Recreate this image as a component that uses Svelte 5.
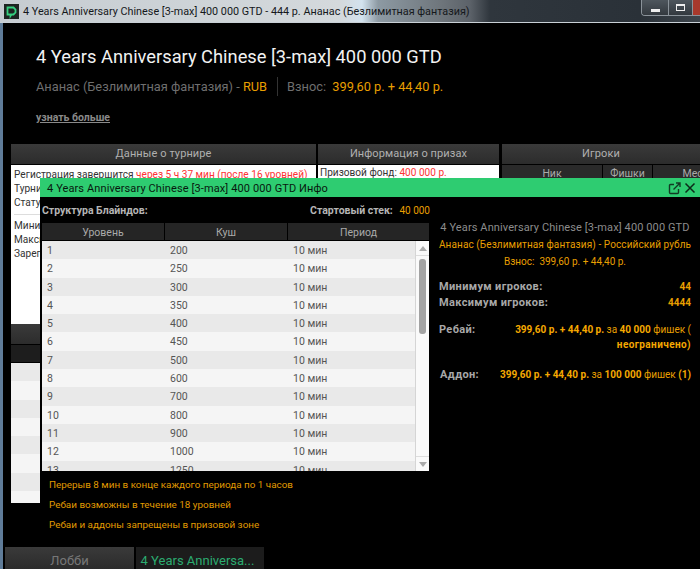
<script>
  const blinds = [200, 250, 300, 350, 400, 450, 500, 600, 700, 800, 900, 1000, 1250];
  const notes = [
    "Перерыв 8 мин в конце каждого периода по 1 часов",
    "Ребаи возможны в течение 18 уровней",
    "Ребаи и аддоны запрещены в призовой зоне",
  ];
</script>

<div class="window">
  <div class="titlebar">
    <svg class="logo" width="15" height="15" viewBox="0 0 15 15">
      <rect width="15" height="15" fill="#1d2421" />
      <path d="M3.500 3.500h6l2 2v3l-2 2H7.500l-1 1.500v-1.500h-3z" fill="none" stroke="#35d07f" stroke-width="1.800" />
    </svg>
    <span class="wintitle">4 Years Anniversary Chinese [3-max] 400 000 GTD - 444 р. Ананас (Безлимитная фантазия)</span>
    <div class="controls">
      <span class="ctl"><i class="min"></i></span>
      <span class="ctl"><i class="max"></i></span>
      <span class="ctl close"></span>
    </div>
  </div>

  <div class="content">
    <h1>4 Years Anniversary Chinese [3-max] 400 000 GTD</h1>
    <div class="sub">
      <span>Ананас (Безлимитная фантазия) - <b>RUB</b></span>
      <span class="sep"></span>
      <span>Взнос:&nbsp; <b>399,60 р. + 44,40 р.</b></span>
    </div>
    <div class="more">узнать больше</div>

    <div class="panels">
      <div class="panel info">
        <div class="phead">Данные о турнире</div>
        <div class="pbody">
          <p>Регистрация завершится <span class="red">через 5 ч 37 мин (после 16 уровней)</span></p>
          <p>Турнир</p>
          <p>Статус</p>
          <hr />
          <p>Минимум</p>
          <p>Максимум</p>
          <p>Зарег</p>
        </div>
        <div class="phead low"></div>
        <div class="phead sublow"></div>
        <div class="stripes">
          {#each Array(8) as _, i}
            <div class="stripe" class:alt={i % 2 === 1}></div>
          {/each}
        </div>
      </div>
      <div class="panel prize">
        <div class="phead">Информация о призах</div>
        <div class="pbody short"><p>Призовой фонд: <span class="red">400 000 р.</span></p></div>
      </div>
      <div class="panel players">
        <div class="phead">Игроки</div>
        <div class="cols">
          <span class="c1">Ник</span>
          <span class="c2">Фишки</span>
          <span class="c3">Место</span>
        </div>
      </div>
    </div>
  </div>

  <div class="tabs">
    <div class="tab">Лобби</div>
    <div class="tab active">4 Years Anniversa...</div>
  </div>

  <div class="dialog">
    <div class="dhead">
      <span>4 Years Anniversary Chinese [3-max] 400 000 GTD Инфо</span>
      <svg width="13" height="13" viewBox="0 0 13 13" class="popout">
        <path d="M6 2.500H2.500a1 1 0 0 0-1 1v7a1 1 0 0 0 1 1h7a1 1 0 0 0 1-1V7M5.500 7.500l6-6M8 1h4v4" fill="none" stroke="#123b24" stroke-width="1.400" />
      </svg>
      <svg width="12" height="12" viewBox="0 0 12 12" class="closex">
        <path d="M1.500 1.500l9 9M10.500 1.500l-9 9" fill="none" stroke="#0c2a18" stroke-width="1.500" />
      </svg>
    </div>
    <div class="dbody">
      <div class="left">
        <div class="structure">
          <b>Структура Блайндов:</b>
          <span class="stack"><b>Стартовый стек:</b> <em>40 000</em></span>
        </div>
        <div class="thead">
          <span>Уровень</span>
          <span>Куш</span>
          <span>Период</span>
        </div>
        <div class="tbody">
          <div class="rows">
            {#each blinds as b, i}
              <div class="row" class:alt={i % 2 === 1}>
                <span>{i + 1}</span>
                <span>{b}</span>
                <span>10 мин</span>
              </div>
            {/each}
          </div>
          <div class="scroll">
            <div class="sbtn"><i class="up"></i></div>
            <div class="track"><div class="thumb"></div></div>
            <div class="sbtn"><i class="down"></i></div>
          </div>
        </div>
        <div class="notes">
          {#each notes as n}
            <p>{n}</p>
          {/each}
        </div>
      </div>

      <div class="right">
        <div class="rtitle">4 Years Anniversary Chinese [3-max] 400 000 GTD</div>
        <div class="rgame">Ананас (Безлимитная фантазия) - Российский рубль</div>
        <div class="rfee">Взнос:&nbsp; 399,60 р. + 44,40 р.</div>
        <div class="kv first"><b>Минимум игроков:</b><em>44</em></div>
        <div class="kv"><b>Максимум игроков:</b><em>4444</em></div>
        <div class="kv rebuy">
          <b>Ребай:</b>
          <em><strong>399,60 р. + 44,40 р.</strong> за <strong>40 000</strong> фишек (<br /><strong class="wide">неограничено)</strong></em>
        </div>
        <div class="kv addon">
          <b>Аддон:</b>
          <em><strong>399,60 р. + 44,40 р.</strong> за <strong>100 000</strong> фишек <strong>(1)</strong></em>
        </div>
      </div>
    </div>
  </div>
</div>

<style>
  :global(body) {
    margin: 0;
    background: #000;
  }

  .window {
    position: relative;
    width: 700px;
    height: 569px;
    overflow: hidden;
    display: flex;
    flex-direction: column;
    background: #000;
    font-family: Roboto, "Liberation Sans", sans-serif;
  }

  .titlebar {
    flex: 0 0 23px;
    display: flex;
    align-items: center;
    padding-left: 3px;
    box-sizing: border-box;
    border-bottom: 1px solid #c9d0d6;
    background: linear-gradient(90deg, #c6ccd1 0, #d4d9dc 340px, #d3e2ee 362px, #8d9aa3 378px, #6f767c 440px, #5c6269 470px, #2f363d 490px, #2a3138 640px, #3d454c 700px);
  }

  .logo {
    margin-left: 1px;
    flex: none;
  }

  .wintitle {
    margin-left: 4px;
    font-size: 10.800px;
    white-space: nowrap;
    color: #15181b;
  }

  .controls {
    margin-left: auto;
    align-self: flex-start;
    display: flex;
    height: 15px;
    border: 1px solid #8b939a;
    border-top: 0;
    border-right: 0;
    border-radius: 0 0 0 4px;
    overflow: hidden;
  }

  .ctl {
    width: 26px;
    display: flex;
    align-items: center;
    justify-content: center;
    border-right: 1px solid #8b939a;
    background: linear-gradient(#4e565d, #33393f);
  }

  .ctl + .ctl {
    width: 23px;
  }

  .ctl.close {
    width: 7px;
    border-right: 0;
    background: #a8392c;
  }

  .min {
    width: 9px;
    height: 3px;
    margin-top: 5px;
    background: #eee;
  }

  .max {
    width: 7px;
    height: 4px;
    border: 1px solid #eee;
    border-top-width: 2px;
  }

  .content {
    flex: 1;
    min-height: 0;
    box-sizing: border-box;
    border-left: 3px solid #5f7c99;
    padding: 23px 0 0 8px;
  }

  h1 {
    margin: 0 0 0 25px;
    font-size: 18.300px;
    line-height: 22px;
    font-weight: 400;
    white-space: nowrap;
    color: #f2f2f2;
  }

  .sub {
    margin: 8px 0 0 25px;
    display: flex;
    align-items: center;
    height: 20px;
    font-size: 12.800px;
    color: #6f6f6f;
    white-space: nowrap;
  }

  .sub b {
    font-weight: 400;
    color: #e89f00;
  }

  .sep {
    width: 1px;
    height: 19px;
    margin: 0 9px 0 10px;
    background: #333;
  }

  .more {
    margin: 15px 0 0 25px;
    font-size: 10.500px;
    line-height: 13px;
    font-weight: 700;
    color: #8a8a8a;
    text-decoration: underline;
  }

  .panels {
    margin-top: 20px;
    display: flex;
    gap: 2px;
  }

  .panel {
    flex: none;
  }

  .info {
    width: 305px;
  }

  .prize {
    width: 181px;
  }

  .players {
    flex: 1;
    margin-left: 1px;
    min-width: 0;
    overflow: hidden;
  }

  .phead {
    height: 20px;
    line-height: 20px;
    text-align: center;
    font-size: 11px;
    letter-spacing: 0.1px;
    color: #b0b0b0;
    background: linear-gradient(#3a3a3a, #2c2c2c);
    border-bottom: 1px solid #000;
  }

  .pbody {
    height: 159px;
    box-sizing: border-box;
    padding: 3px 3px;
    background: #fff;
    font-size: 10.100px;
    line-height: 14px;
    color: #333;
    white-space: nowrap;
    overflow: hidden;
  }

  .pbody p {
    margin: 0;
  }

  .pbody hr {
    margin: 4px 0;
    border: 0;
    border-top: 1px solid #ddd;
  }

  .short {
    height: 13px;
    padding: 1px 2px 0;
  }

  .red {
    color: #f33;
  }

  .sublow {
    height: 17px;
    background: #1d1d1d;
  }

  .stripes {
    height: 140px;
    overflow: hidden;
  }

  .stripe {
    height: 18.300px;
    background: #e9e9e9;
  }

  .stripe.alt {
    background: #f5f5f5;
  }

  .cols {
    display: flex;
    gap: 1px;
    height: 13px;
    line-height: 18px;
    font-size: 10.500px;
    text-align: center;
    color: #aaa;
  }

  .cols span {
    background: #2a2a2a;
    flex: none;
  }

  .c1 {
    width: 100px;
  }

  .c2 {
    width: 49px;
  }

  .c3 {
    width: 90px;
  }

  .tabs {
    flex: 0 0 22px;
    display: flex;
    gap: 2px;
    border-left: 3px solid #5f7c99;
    padding-left: 2px;
  }

  .tab {
    width: 129px;
    height: 22px;
    padding-top: 3px;
    box-sizing: border-box;
    line-height: 22px;
    text-align: center;
    font-size: 13px;
    color: #777;
    background: linear-gradient(#3a3a3a, #2b2b2b);
    white-space: nowrap;
  }

  .tab.active {
    width: 128px;
    padding-right: 5px;
    color: #2bab70;
    background: #1c1c1c;
  }

  /* floats over the lobby */
  .dialog {
    position: absolute;
    left: 40px;
    top: 178px;
    right: 0;
    height: 369px;
    background: #000;
    display: flex;
    flex-direction: column;
  }

  .dhead {
    flex: 0 0 19px;
    display: flex;
    align-items: center;
    padding: 1px 4px 0 7px;
    box-sizing: border-box;
    background: #2ecc71;
    font-size: 11px;
    letter-spacing: 0.01em;
    color: #08180f;
    white-space: nowrap;
  }

  .popout {
    margin-left: auto;
  }

  .closex {
    margin-left: 3px;
  }

  .dbody {
    flex: 1;
    display: flex;
    min-height: 0;
  }

  .left {
    width: 390px;
    flex: none;
    padding-left: 2px;
    box-sizing: border-box;
    font-size: 10.500px;
  }

  .structure {
    display: flex;
    justify-content: space-between;
    align-items: center;
    height: 26px;
    color: #b5b5b5;
    white-space: nowrap;
  }

  .structure b {
    font-weight: 700;
  }

  .stack em {
    margin-left: 4px;
    font-size: 10px;
    font-style: normal;
    color: #e89f00;
  }

  .thead {
    display: flex;
    gap: 1px;
    height: 17px;
    margin-right: 1px;
    margin-bottom: 1px;
    line-height: 19px;
    font-size: 10.500px;
    color: #aaa;
    text-align: center;
  }

  .thead span {
    width: 122px;
    background: #252525;
  }

  .thead span:nth-child(3) {
    flex: 1;
  }

  .tbody {
    display: flex;
    height: 230px;
    overflow: hidden;
    margin-right: 1px;
    background: #f5f5f5;
  }

  .rows {
    flex: 1;
  }

  .row {
    display: flex;
    height: 18.300px;
    box-sizing: border-box;
    padding-top: 1px;
    line-height: 17.300px;
    font-size: 10.500px;
    color: #555;
    background: #e9e9e9;
  }

  .row.alt {
    background: #f5f5f5;
  }

  .row span {
    width: 123px;
    padding-left: 5px;
    box-sizing: border-box;
  }

  .scroll {
    flex: 0 0 13px;
    display: flex;
    flex-direction: column;
    border-left: 1px solid #d5d5d5;
    background: #fafafa;
  }

  .sbtn {
    flex: 0 0 14px;
    display: flex;
    align-items: center;
    justify-content: center;
    border-bottom: 1px solid #ddd;
  }

  .sbtn:last-child {
    border-bottom: 0;
    border-top: 1px solid #ddd;
  }

  .sbtn i {
    width: 0;
    height: 0;
    border-left: 4px solid transparent;
    border-right: 4px solid transparent;
  }

  .up {
    border-bottom: 5px solid #aaa;
  }

  .down {
    border-top: 5px solid #aaa;
  }

  .track {
    flex: 1;
    padding: 3px 3px 0;
  }

  .thumb {
    height: 75px;
    border-radius: 3px;
    background: #a3a3a3;
  }

  .notes {
    padding: 4px 0 0 7px;
    color: #e09a00;
    font-size: 9.900px;
  }

  .notes p {
    margin: 0;
    height: 20.200px;
    line-height: 20.200px;
  }

  .right {
    flex: 1;
    min-width: 0;
    padding: 22px 9px 0 9px;
    font-size: 10px;
    text-align: center;
    white-space: nowrap;
    color: #e89f00;
  }

  .rtitle {
    font-size: 11px;
    line-height: 17px;
    color: #8c8c8c;
    letter-spacing: 0.01em;
  }

  .rgame {
    line-height: 17px;
    letter-spacing: 0.01em;
  }

  .rfee {
    line-height: 17px;
  }

  .kv {
    display: flex;
    justify-content: space-between;
    align-items: flex-start;
    line-height: 15px;
    text-align: right;
  }

  .kv b {
    font-size: 11px;
    letter-spacing: 0.35px;
    color: #a8a8a8;
    font-weight: 700;
  }

  .kv em {
    font-style: normal;
    font-weight: 400;
  }

  .kv strong {
    font-weight: 700;
    color: #f5a800;
  }

  .kv strong.wide {
    letter-spacing: 0.4px;
  }

  .first {
    margin-top: 9px;
  }

  .kv.first em,
  .kv.first + .kv em {
    font-weight: 700;
  }

  .first + .kv {
    margin-top: 1px;
  }

  .rebuy {
    margin-top: 12px;
  }

  .addon {
    margin-top: 15px;
    padding-left: 1px;
  }
</style>
